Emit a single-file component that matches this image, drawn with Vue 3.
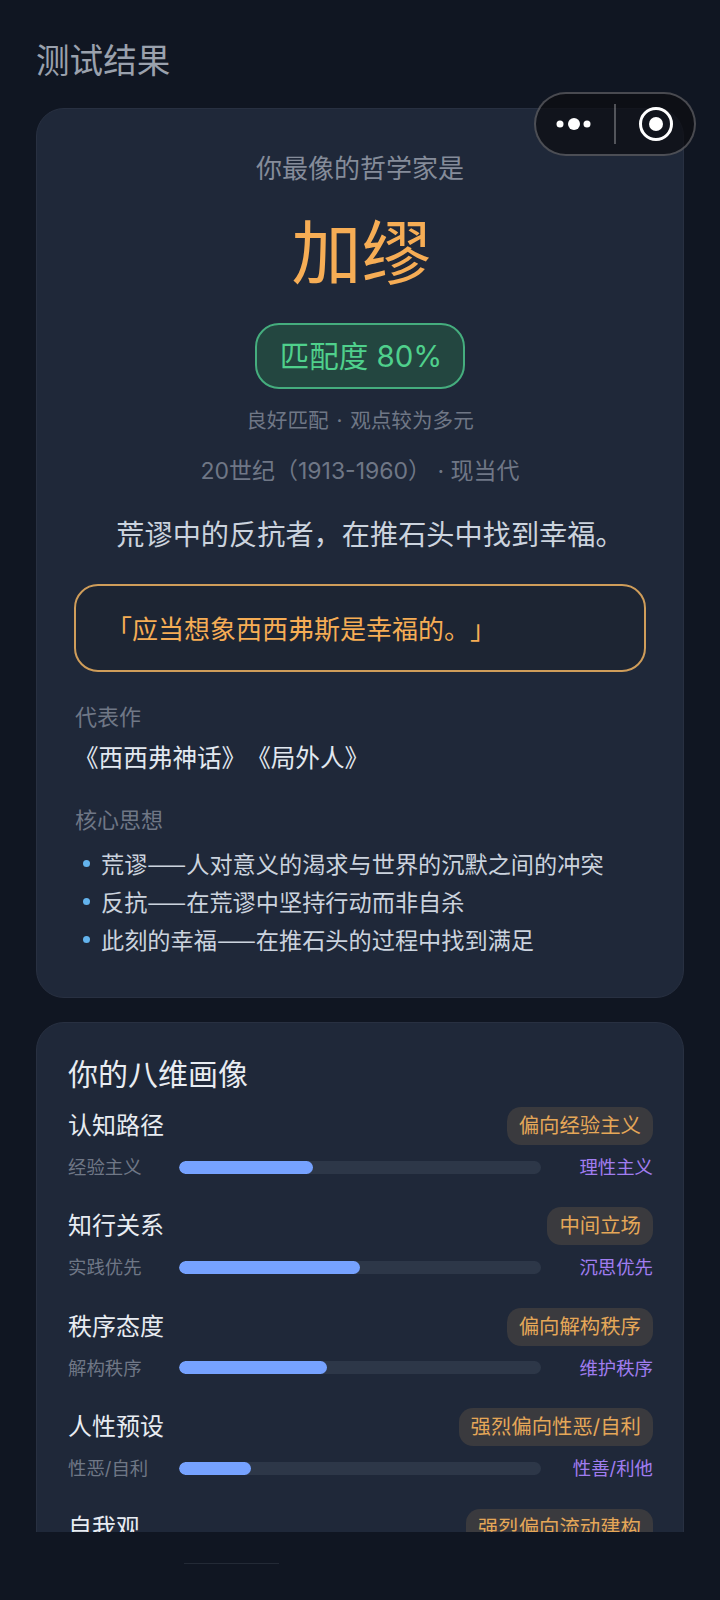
<script setup>
const points = [
  '荒谬——人对意义的渴求与世界的沉默之间的冲突',
  '反抗——在荒谬中坚持行动而非自杀',
  '此刻的幸福——在推石头的过程中找到满足',
]
const dims = [
  { name: '认知路径', tag: '偏向经验主义', left: '经验主义', right: '理性主义', pct: 37 },
  { name: '知行关系', tag: '中间立场', left: '实践优先', right: '沉思优先', pct: 50 },
  { name: '秩序态度', tag: '偏向解构秩序', left: '解构秩序', right: '维护秩序', pct: 41 },
  { name: '人性预设', tag: '强烈偏向性恶/自利', left: '性恶/自利', right: '性善/利他', pct: 20 },
]
</script>

<template>
  <div class="page">
    <div class="scroll">
      <h1 class="title">测试结果</h1>
      <section class="card hero">
        <p class="lead">你最像的哲学家是</p>
        <p class="name">加缪</p>
        <div class="match">匹配度 80%</div>
        <p class="note">良好匹配 · 观点较为多元</p>
        <p class="era">20世纪（1913-1960） · 现当代</p>
        <p class="motto">荒谬中的反抗者，在推石头中找到幸福。</p>
        <div class="quote">「应当想象西西弗斯是幸福的。」</div>
        <p class="label works-label">代表作</p>
        <p class="works">《西西弗神话》《局外人》</p>
        <p class="label ideas-label">核心思想</p>
        <ul class="ideas">
          <li v-for="p in points" :key="p">{{ p }}</li>
        </ul>
      </section>
      <section class="card dims">
        <h2 class="dims-title">你的八维画像</h2>
        <div v-for="d in dims" :key="d.name" class="dim">
          <div class="dim-head">
            <span class="dim-name">{{ d.name }}</span>
            <span class="dim-tag">{{ d.tag }}</span>
          </div>
          <div class="dim-bar">
            <span class="end-l">{{ d.left }}</span>
            <div class="track"><div class="fill" :style="{ width: d.pct + '%' }"></div></div>
            <span class="end-r">{{ d.right }}</span>
          </div>
        </div>
        <div class="dim">
          <div class="dim-head">
            <span class="dim-name">自我观</span>
            <span class="dim-tag">强烈偏向流动建构</span>
          </div>
        </div>
      </section>
    </div>
    <div class="bottom"><span class="bottom-line"></span></div>
    <div class="capsule">
      <svg class="dots" width="40" height="14" viewBox="0 0 40 14">
        <circle cx="6" cy="7" r="3.5" fill="#fff" />
        <circle cx="20" cy="7" r="6" fill="#fff" />
        <circle cx="33" cy="7" r="3.5" fill="#fff" />
      </svg>
      <span class="cap-div"></span>
      <svg class="target" width="36" height="36" viewBox="0 0 36 36">
        <circle cx="18" cy="18" r="15.5" fill="none" stroke="#fff" stroke-width="3" />
        <circle cx="18" cy="18" r="7" fill="#fff" />
      </svg>
    </div>
  </div>
</template>

<style>
html, body { margin: 0; background: #101622; }
</style>

<style scoped>
* { box-sizing: border-box; }
.page {
  position: relative;
  width: 720px;
  height: 1600px;
  overflow: hidden;
  background: #101622;
  font-family: "Noto Sans CJK SC", "Noto Sans", sans-serif;
  font-weight: 400;
  text-spacing-trim: space-all;
}
.scroll {
  height: 1532px;
  overflow: hidden;
  padding: 35px 36px 0;
}
.title {
  margin: 0 0 25px;
  font-size: 33.6px;
  line-height: 48px;
  font-weight: 400;
  color: #9aa1ad;
}
.card {
  background: #1f2839;
  border: 1px solid #283041;
  border-radius: 28px;
}
p { margin: 0; }
.hero {
  height: 890px;
  padding: 40px 37px 0;
  text-align: center;
}
.lead { font-size: 26px; line-height: 36px; color: #858c9a; }
.name { margin-top: 14px; padding-left: 3px; font-size: 70px; line-height: 100px; font-weight: 400; color: #f6ad55; }
.match {
  width: 210px;
  height: 66px;
  margin: 24px auto 0;
  padding-left: 2px;
  border: 2px solid #45ad7e;
  border-radius: 24px;
  background: #234640;
  color: #4fd08c;
  font-family: Inter, "Noto Sans CJK SC", sans-serif;
  font-size: 29.5px;
  line-height: 62px;
}
.note {
  margin-top: 16px;
  font-family: Inter, "Noto Sans CJK SC", sans-serif;
  font-size: 20.6px;
  line-height: 32px;
  word-spacing: 2px;
  color: #6f7786;
}
.era {
  margin-top: 17px;
  font-family: Inter, "Noto Sans CJK SC", sans-serif;
  font-size: 23px;
  line-height: 34px;
  color: #6f7786;
}
.motto { margin-top: 25px; padding-left: 20px; font-size: 28.2px; line-height: 40px; color: #cbd3de; }
.quote {
  height: 88px;
  margin-top: 31px;
  padding: 0 30px;
  border: 2px solid #cf9d5a;
  border-radius: 24px;
  background: #1d2533;
  color: #f6ad55;
  font-size: 26px;
  line-height: 84px;
  text-align: left;
}
.label { font-size: 22px; line-height: 32px; color: #6f7786; text-align: left; padding-left: 1px; }
.works-label { margin-top: 27px; }
.works { margin-top: 8px; font-size: 24.6px; line-height: 34px; color: #e2e8f0; text-align: left; }
.ideas-label { margin-top: 29px; }
.ideas {
  margin: 10px 0 0;
  padding: 0;
  list-style: none;
  text-align: left;
}
.ideas li {
  position: relative;
  padding-left: 27px;
  font-size: 23.2px;
  line-height: 38px;
  color: #cbd3de;
}
.ideas li::before {
  content: "";
  position: absolute;
  left: 9px;
  top: 16px;
  width: 7px;
  height: 7px;
  border-radius: 50%;
  background: #63b3ed;
}
.dims {
  margin-top: 24px;
  padding: 27px 30px 0 31px;
}
.dims-title { margin: 0 0 13px; font-size: 30px; line-height: 44px; font-weight: 400; color: #e8ecf2; }
.dim { height: 100.4px; }
.dim-head {
  display: flex;
  align-items: center;
  justify-content: space-between;
  height: 38px;
}
.dim-name { font-size: 24px; line-height: 34px; height: 38px; color: #e8ecf2; }
.dim-tag {
  height: 38px;
  padding: 0 12px;
  border-radius: 14px;
  background: #3a3a3e;
  color: #e5a758;
  font-family: Inter, "Noto Sans CJK SC", sans-serif;
  font-size: 20.4px;
  line-height: 37px;
}
.dim-bar {
  display: grid;
  grid-template-columns: 111px 1fr 112px;
  align-items: center;
  height: 26px;
  margin-top: 9px;
}
.end-l { font-family: Inter, "Noto Sans CJK SC", sans-serif; font-size: 18.4px; line-height: 26px; color: #6f7786; }
.end-r { font-family: Inter, "Noto Sans CJK SC", sans-serif; font-size: 18.4px; line-height: 26px; color: #a07df0; text-align: right; }
.track { height: 13px; border-radius: 7px; background: #2d3748; overflow: hidden; }
.fill { height: 100%; border-radius: 7px; background: #76a2ff; }
.bottom { position: relative; height: 68px; background: #101622; }
.bottom-line {
  position: absolute;
  left: 184px;
  top: 31px;
  width: 95px;
  height: 1px;
  background: #232a36;
}
.capsule {
  position: absolute;
  top: 92px;
  left: 534px;
  width: 162px;
  height: 64px;
  display: flex;
  align-items: center;
  border: 2px solid rgba(255, 255, 255, 0.25);
  border-radius: 32px;
  background: rgba(12, 13, 17, 0.72);
}
.dots { position: absolute; left: 18px; top: 23px; }
.cap-div { position: absolute; left: 78px; top: 10px; width: 1.5px; height: 40px; background: rgba(255, 255, 255, 0.28); }
.target { position: absolute; left: 102px; top: 12px; }
</style>
